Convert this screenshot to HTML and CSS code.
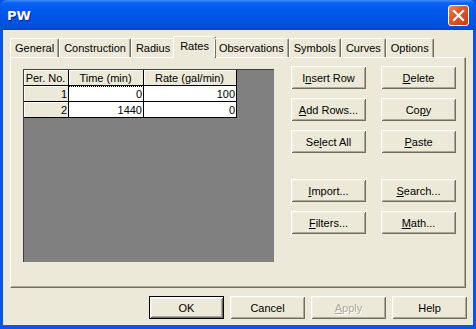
FILE: index.html
```html
<!DOCTYPE html>
<html lang="en">
<head>
    <meta charset="utf-8">
    <title>PW</title>
    <link rel="stylesheet" href="styles.css">
</head>
<body>
    <div class="window">
        <div class="titlebar">
            <span class="title">PW</span>
            <div class="close">
                <svg width="13" height="13" viewBox="0 0 13 13">
                    <path d="M2 2 L11 11 M11 2 L2 11" stroke="#fff" stroke-width="2.2" stroke-linecap="square"/>
                </svg>
            </div>
        </div>

        <div class="client">
            <div class="tabs">
                <div class="tab">General</div>
                <div class="tab">Construction</div>
                <div class="tab">Radius</div>
                <div class="tab active">Rates</div>
                <div class="tab">Observations</div>
                <div class="tab">Symbols</div>
                <div class="tab">Curves</div>
                <div class="tab">Options</div>
            </div>

            <div class="panel">
                <div class="grid">
                    <table class="rates">
                        <tr>
                            <th class="col-per">Per. No.</th>
                            <th class="col-time">Time (min)</th>
                            <th class="col-rate">Rate (gal/min)</th>
                        </tr>
                        <tr>
                            <td class="rowhead">1</td>
                            <td><span class="focus">0</span></td>
                            <td>100</td>
                        </tr>
                        <tr>
                            <td class="rowhead">2</td>
                            <td>1440</td>
                            <td>0</td>
                        </tr>
                    </table>
                </div>

                <div class="actions">
                    <div class="btn-group">
                        <button class="btn">I<u>n</u>sert Row</button>
                        <button class="btn"><u>D</u>elete</button>
                        <button class="btn"><u>A</u>dd Rows...</button>
                        <button class="btn">Co<u>p</u>y</button>
                        <button class="btn">Se<u>l</u>ect All</button>
                        <button class="btn"><u>P</u>aste</button>
                    </div>
                    <div class="btn-group lower">
                        <button class="btn"><u>I</u>mport...</button>
                        <button class="btn"><u>S</u>earch...</button>
                        <button class="btn"><u>F</u>ilters...</button>
                        <button class="btn"><u>M</u>ath...</button>
                    </div>
                </div>
            </div>

            <div class="footer">
                <button class="btn default">OK</button>
                <button class="btn">Cancel</button>
                <button class="btn disabled"><u>A</u>pply</button>
                <button class="btn">Help</button>
            </div>
        </div>
    </div>
</body>
</html>
```

FILE: styles.css
```css
body {
    margin: 0;
    padding: 0;
    font-family: "Liberation Sans", Arial, sans-serif;
    font-size: 11px;
    background-color: #ffffff;
}

.window {
    width: 476px;
    height: 329px;
    box-sizing: border-box;
    background-color: #0a54e6;
    display: flex;
    flex-direction: column;
}

/* Title bar */
.titlebar {
    height: 30px;
    flex-shrink: 0;
    display: flex;
    align-items: center;
    justify-content: space-between;
    padding: 0 7px 0 7px;
    background: linear-gradient(#3d8dff 0, #0a62f2 3px, #0058ee 10px, #0055e6 60%, #0050dc 90%, #0046c4 100%);
    border-radius: 7px 7px 0 0;
}

.title {
    color: #ffffff;
    font-family: "DejaVu Sans", sans-serif;
    font-weight: bold;
    font-size: 13px;
    text-shadow: 1px 1px #0a1e8c;
    margin-top: 1px;
}

.close {
    width: 21px;
    height: 21px;
    box-sizing: border-box;
    border: 1px solid #ffffff;
    border-radius: 3px;
    background: linear-gradient(135deg, #f08a5e 0, #e0562a 40%, #c93c12 100%);
    display: flex;
    align-items: center;
    justify-content: center;
    margin-top: 1px;
}

/* Dialog client area */
.client {
    flex-grow: 1;
    margin: 0 3px 4px 3px;
    background-color: #ece9d8;
    display: flex;
    flex-direction: column;
}

.tabs {
    display: flex;
    align-items: flex-end;
    height: 22px;
    margin: 5px 0 0 7px;
    position: relative;
    z-index: 1;
}

.tab {
    height: 19px;
    box-sizing: border-box;
    padding: 3px 4px 0 4px;
    border-top: 1px solid #ffffff;
    border-left: 1px solid #ffffff;
    border-right: 1px solid #716f64;
    box-shadow: inset -1px 0 #aca899;
    border-radius: 2px 2px 0 0;
    white-space: nowrap;
    color: #000000;
}

.tab.active {
    height: 22px;
    margin: 0 -2px -1px -2px;
    padding: 3px 6px 0 6px;
    background-color: #ece9d8;
}

.panel {
    margin-left: 7px;
    width: 456px;
    height: 231px;
    box-sizing: border-box;
    border-top: 1px solid #ffffff;
    border-left: 1px solid #ffffff;
    border-right: 1px solid #716f64;
    border-bottom: 1px solid #716f64;
    box-shadow: inset -1px -1px #aca899;
    padding: 8px 0 0 12px;
    display: flex;
    align-items: flex-start;
}

/* Rates grid */
.grid {
    width: 251px;
    height: 193px;
    margin-top: 3px;
    box-sizing: border-box;
    background-color: #808080;
    border-left: 1px solid #404040;
    border-top: 1px solid #404040;
}

.rates {
    border-collapse: collapse;
    font-size: 11px;
}

.rates th,
.rates td {
    height: 15px;
    padding: 0 1px 0 0;
    border: 1px solid #000000;
    border-top: none;
    border-left: none;
    line-height: 14px;
}

.rates th {
    background-color: #ece9d8;
    font-weight: normal;
    text-align: center;
    box-shadow: inset 1px 1px #ffffff;
}

.rates td {
    background-color: #ffffff;
    text-align: right;
}

.rates td.rowhead {
    background-color: #ece9d8;
    box-shadow: inset 1px 1px #ffffff;
}

.col-per {
    width: 43px;
}

.col-time {
    width: 73px;
}

.col-rate {
    width: 91px;
}

.focus {
    display: block;
    outline: 1px dotted #000000;
    outline-offset: 0;
    margin: 0 -1px 0 0;
    padding-right: 1px;
}

/* Buttons */
.actions {
    margin-left: 17px;
}

.btn-group {
    display: grid;
    grid-template-columns: 75px 75px;
    column-gap: 15px;
    row-gap: 9px;
}

.btn-group.lower {
    margin-top: 26px;
}

.btn {
    width: 75px;
    height: 23px;
    padding: 0;
    box-sizing: border-box;
    font-family: "Liberation Sans", Arial, sans-serif;
    font-size: 11px;
    color: #000000;
    background-color: #ece9d8;
    border: none;
    box-shadow: inset 1px 1px #ffffff, inset -1px -1px #716f64, inset 2px 2px #f1efe2, inset -2px -2px #aca899;
}

.btn.default {
    border: 1px solid #000000;
}

.btn.disabled {
    color: #aca899;
    text-shadow: 1px 1px #ffffff;
}

.footer {
    display: flex;
    justify-content: flex-end;
    gap: 6px;
    margin: 8px 6px 0 0;
}
```
